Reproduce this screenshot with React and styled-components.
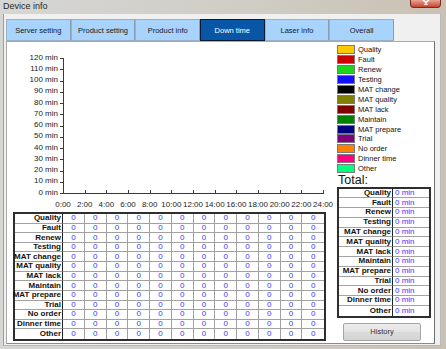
import React from 'react';
import styled, { createGlobalStyle } from 'styled-components';

const Global = createGlobalStyle`
  html, body { margin: 0; padding: 0; background: #d0ccc4; }
  body { width: 446px; height: 349px; overflow: hidden; font-family: "Liberation Sans", Arial, sans-serif; }
  * { box-sizing: border-box; }
`;

const Window = styled.div`
  width: 446px;
  height: 349px;
  display: flex;
  flex-direction: column;
  background: linear-gradient(90deg, #d6d6d3 0%, #d0cdc6 55%, #c9c1b2 100%);
`;

const TitleBar = styled.div`
  height: 14px;
  display: flex;
  align-items: flex-start;
  justify-content: space-between;
  padding: 0 5px 0 3px;
`;

const Title = styled.span`
  font-family: "Liberation Sans", Arial, sans-serif;
  font-size: 9px;
  line-height: 13px;
  color: #2a2a2a;
`;

const CloseBtn = styled.div`
  width: 31px;
  height: 8px;
  border: 1px solid #7a2b1f;
  border-top: none;
  border-radius: 0 0 4px 4px;
  background: linear-gradient(#e6a596, #c8452f);
  display: flex;
  justify-content: center;
  align-items: flex-start;
`;

const Frame = styled.div`
  flex: 1;
  display: flex;
  padding: 0 5px 3px 3px;
`;

const Client = styled.div`
  flex: 1;
  display: flex;
  flex-direction: column;
  background: #f0f0f0;
  border-left: 1px solid #9e9e9e;
  border-right: 1px solid #b8b8b8;
  border-bottom: 1px solid #b8b8b8;
  padding: 5px 5px 1px 1px;
`;

const TabRow = styled.div`
  display: flex;
  height: 22px;
  padding-left: 1px;
`;

const Tab = styled.div`
  width: 64.67px;
  height: 22px;
  display: flex;
  align-items: center;
  justify-content: center;
  font-size: 7.5px;
  color: ${p => (p.$active ? '#ffffff' : '#1a1a1a')};
  background: ${p => (p.$active ? '#0a56a6' : '#a7d3fd')};
  border: 1px solid ${p => (p.$active ? '#0b1a2c' : '#9cb1c6')};
  border-right-color: ${p => (p.$active ? '#0b1a2c' : '#8a9cb0')};
`;

const Panel = styled.div`
  flex: 1;
  margin-left: 1px;
  background: #ffffff;
  border: 1px solid #a9a9a9;
  border-right-color: #6f6f6f;
  border-bottom-color: #8a8a8a;
  display: flex;
  gap: 11px;
  padding: 0 2px 2px 6px;
`;

const LeftCol = styled.div`
  width: 313px;
  display: flex;
  flex-direction: column;
`;

const RightCol = styled.div`
  width: 95px;
  display: flex;
  flex-direction: column;
  padding-top: 3px;
`;

const ChartSvg = styled.svg`
  display: block;
  width: 313px;
  height: 170px;
  overflow: visible;
  font-family: "Liberation Sans Narrow", "Liberation Sans", Arial, sans-serif;
`;

const Grid = styled.div`
  display: grid;
  grid-template-columns: ${p => p.$cols};
  grid-template-rows: repeat(13, 1fr);
  height: ${p => p.$h}px;
  width: ${p => p.$w}px;
  border: 2px solid #2e2e2e;
`;

const LabelCell = styled.div`
  font-size: 8px;
  font-weight: bold;
  color: #111;
  text-align: right;
  white-space: nowrap;
  line-height: 1;
  display: flex;
  align-items: center;
  justify-content: flex-end;
  padding-right: 1px;
  border-right: 1px solid #222;
  border-bottom: ${p => (p.$last ? 'none' : '1px solid #a2a2a2')};
  overflow: visible;
`;

const ValueCell = styled.div`
  font-size: 8px;
  color: #3838ff;
  line-height: 1;
  display: flex;
  align-items: center;
  justify-content: ${p => (p.$left ? 'flex-start' : 'center')};
  padding-left: ${p => (p.$left ? '2px' : '0')};
  border-right: ${p => (p.$lastCol ? 'none' : '1px solid #a2a2a2')};
  border-bottom: ${p => (p.$last ? 'none' : '1px solid #a2a2a2')};
  white-space: nowrap;
`;

const Legend = styled.div`
  display: grid;
  grid-template-rows: repeat(13, 9.9px);
`;

const LegendRow = styled.div`
  display: flex;
  align-items: center;
  gap: 3px;
  font-size: 7.5px;
  color: #111;
  white-space: nowrap;
`;

const Swatch = styled.span`
  width: 18px;
  height: 9px;
  background: ${p => p.$c};
  border: 1px solid #7a7a7a;
  flex: none;
`;

const TotalTitle = styled.div`
  height: 13px;
  font-size: 12.5px;
  line-height: 13px;
  color: #111;
  padding-left: 1px;
`;

const HistoryButton = styled.button`
  margin: 5px 0 0 6px;
  width: 78px;
  height: 18px;
  border: 1px solid #a5a5a5;
  border-radius: 2px;
  background: linear-gradient(#ececec, #e2e2e2 50%, #dadada 51%, #d4d4d4);
  font-family: "Liberation Sans", Arial, sans-serif;
  font-size: 7.5px;
  color: #333;
  padding: 0;
`;

const tabs = ['Server setting', 'Product setting', 'Product info', 'Down time', 'Laser info', 'Overall'];

const cats = [
  ['Quality', '#ffc800'],
  ['Fault', '#cc0000'],
  ['Renew', '#1ed41e'],
  ['Testing', '#1010ff'],
  ['MAT change', '#000000'],
  ['MAT quality', '#808000'],
  ['MAT lack', '#800000'],
  ['Maintain', '#008000'],
  ['MAT prepare', '#000080'],
  ['Trial', '#800080'],
  ['No order', '#ff8000'],
  ['Dinner time', '#ff0080'],
  ['Other', '#00ff80'],
];

function Chart() {
  const x0 = 50;
  const step = 21.67;
  const top = 16;
  const ys = 11.25;
  const bottom = top + ys * 12;
  const yl = Array.from({ length: 13 }, (_, i) => i);
  const xl = Array.from({ length: 13 }, (_, i) => i);
  return (
    <ChartSvg viewBox="0 0 313 170">
      <g stroke="#3a3a3a" strokeWidth="1" shapeRendering="crispEdges">
        <line x1={x0 + 0.5} y1={top} x2={x0 + 0.5} y2={bottom + 1} />
        <line x1={x0} y1={bottom + 0.5} x2={x0 + step * 12 + 1} y2={bottom + 0.5} />
        {yl.map(i => (
          <line key={'yt' + i} x1={x0 - 3} y1={top + i * ys + 0.5} x2={x0 + 1} y2={top + i * ys + 0.5} />
        ))}
        {xl.map(i => (
          <line key={'xt' + i} x1={Math.round(x0 + i * step) + 0.5} y1={bottom - 3} x2={Math.round(x0 + i * step) + 0.5} y2={bottom + 1} />
        ))}
      </g>
      <g fontSize="8" fill="#222">
        {yl.map(i => (
          <text key={'yl' + i} x={x0 - 5} y={top + i * ys + 1.5} textAnchor="end">
            {(120 - i * 10) + ' min'}
          </text>
        ))}
        {xl.map(i => (
          <text key={'xl' + i} x={x0 + i * step} y={bottom + 14} textAnchor="middle">
            {i * 2 + ':00'}
          </text>
        ))}
      </g>
    </ChartSvg>
  );
}

export default function App() {
  return (
    <>
      <Global />
      <Window>
        <TitleBar>
          <Title>Device info</Title>
          <CloseBtn>
            <svg width="8" height="5" viewBox="0 0 8 5">
              <path d="M1 0 L4 2.5 L7 0 M2.5 5 L4 3.5 L5.5 5" stroke="#fff" strokeWidth="1.4" fill="none" />
            </svg>
          </CloseBtn>
        </TitleBar>
        <Frame>
          <Client>
            <TabRow>
              {tabs.map(t => (
                <Tab key={t} $active={t === 'Down time'}>{t}</Tab>
              ))}
            </TabRow>
            <Panel>
              <LeftCol>
                <Chart />
                <Grid $cols="48px repeat(12, 1fr)" $h={129} $w={313}>
                  {cats.map(([name], r) => (
                    <React.Fragment key={name}>
                      <LabelCell $last={r === 12}>{name}</LabelCell>
                      {Array.from({ length: 12 }, (_, c) => (
                        <ValueCell key={c} $last={r === 12} $lastCol={c === 11}>0</ValueCell>
                      ))}
                    </React.Fragment>
                  ))}
                </Grid>
              </LeftCol>
              <RightCol>
                <Legend>
                  {cats.map(([name, color]) => (
                    <LegendRow key={name}>
                      <Swatch $c={color} />
                      {name}
                    </LegendRow>
                  ))}
                </Legend>
                <TotalTitle>Total:</TotalTitle>
                <Grid $cols="54px 1fr" $h={131} $w={94}>
                  {cats.map(([name], r) => (
                    <React.Fragment key={name}>
                      <LabelCell $last={r === 12}>{name}</LabelCell>
                      <ValueCell $left $last={r === 12} $lastCol>0 min</ValueCell>
                    </React.Fragment>
                  ))}
                </Grid>
                <HistoryButton>History</HistoryButton>
              </RightCol>
            </Panel>
          </Client>
        </Frame>
      </Window>
    </>
  );
}
